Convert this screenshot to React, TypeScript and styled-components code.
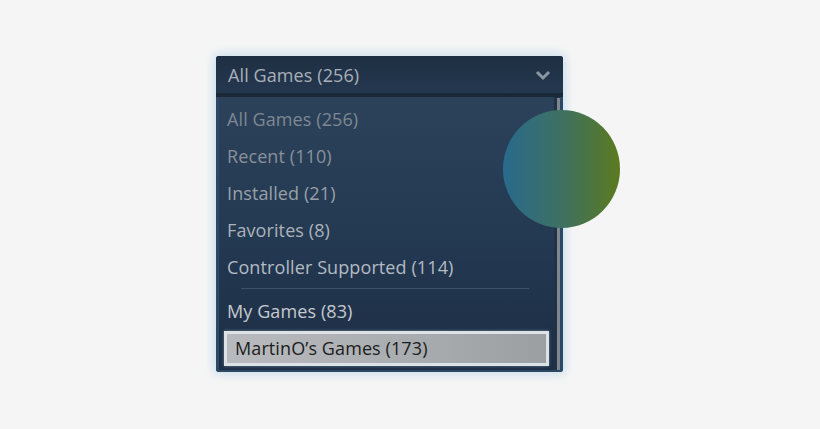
import React from 'react';
import styled, { createGlobalStyle } from 'styled-components';

const GlobalStyle = createGlobalStyle`
  html, body {
    margin: 0;
    padding: 0;
    background: #f5f5f5;
  }

  body {
    font-family: 'Open Sans', 'Liberation Sans', sans-serif;
  }
`;

const Stage = styled.div`
  position: relative;
  width: 820px;
  height: 429px;
  padding: 56px 0 0 216px;
  box-sizing: border-box;
`;

const Panel = styled.div`
  width: 347px;
  height: 316px;
  display: flex;
  flex-direction: column;
  border-radius: 3px;
  overflow: hidden;
  background: #2a4460;
  box-shadow: 0 0 9px 3px rgba(150, 195, 230, 0.4);
`;

const Header = styled.div`
  height: 37px;
  flex-shrink: 0;
  display: flex;
  align-items: center;
  justify-content: space-between;
  padding: 0 12px 0 12px;
  background: linear-gradient(180deg, #1f2f42 0%, #243850 100%);
  border-bottom: 4px solid #1a2838;
  color: #a9b0b8;
  font-size: 18px;
  letter-spacing: 0.1px;
`;

const Chevron = () => (
  <svg width="16" height="12" viewBox="0 0 16 12">
    <path d="M2 3 L8 9 L14 3" fill="none" stroke="#8c97a4" strokeWidth="3" strokeLinejoin="miter" />
  </svg>
);

const ListFrame = styled.div`
  flex: 1;
  display: flex;
  padding: 0 3px 2px 3px;
  background: #2b4965;
`;

const List = styled.div`
  flex: 1;
  display: flex;
  flex-direction: column;
  padding: 3px 5px 3px 5px;
  background: linear-gradient(180deg, #2c425a 0%, #233851 55%, #1c2e44 100%);
`;

const Item = styled.div<{ tone: string }>`
  height: 37px;
  display: flex;
  align-items: center;
  padding-left: 3px;
  font-size: 18px;
  letter-spacing: 0.1px;
  color: ${(props) => props.tone};
`;

const Divider = styled.div`
  height: 1px;
  margin: 3px 20px 3px 17px;
  background: #3c5166;
`;

const Selected = styled.div`
  height: 35px;
  margin-top: 2px;
  box-sizing: border-box;
  border: 3px solid #dde2e6;
  display: flex;
  align-items: center;
  padding: 0 0 2px 8px;
  background: linear-gradient(90deg, #b8babd 0%, #a9acaf 60%, #9c9fa2 100%);
  color: #1b1d20;
  font-size: 18px;
  letter-spacing: 0.1px;
  box-shadow: 0 0 3px rgba(180, 210, 235, 0.5);
`;

const Track = styled.div`
  width: 6px;
  display: flex;
  justify-content: flex-end;
  background: #1f3248;
`;

const Thumb = styled.div`
  width: 3px;
  margin-top: 1px;
  background: #7f868d;
`;

const Orb = styled.div`
  position: absolute;
  left: 503px;
  top: 110px;
  width: 117px;
  height: 118px;
  border-radius: 50%;
  background: linear-gradient(90deg, #296a8c 0%, #3e7062 50%, #5b7a1f 100%);
`;

const items = [
  { label: 'All Games (256)', tone: '#7f8892' },
  { label: 'Recent (110)', tone: '#88919b' },
  { label: 'Installed (21)', tone: '#98a0a9' },
  { label: 'Favorites (8)', tone: '#abb2ba' },
  { label: 'Controller Supported (114)', tone: '#b4bbc3' },
];

const App: React.FC = () => {
  return (
    <>
      <GlobalStyle />
      <Stage>
        <Panel>
          <Header>
            All Games (256)
            <Chevron />
          </Header>
          <ListFrame>
            <List>
              {items.map((item) => (
                <Item key={item.label} tone={item.tone}>{item.label}</Item>
              ))}
              <Divider />
              <Item tone='#c6cacf'>My Games (83)</Item>
              <Selected>MartinO’s Games (173)</Selected>
            </List>
            <Track>
              <Thumb />
            </Track>
          </ListFrame>
        </Panel>
        <Orb />
      </Stage>
    </>
  );
};

export default App;
